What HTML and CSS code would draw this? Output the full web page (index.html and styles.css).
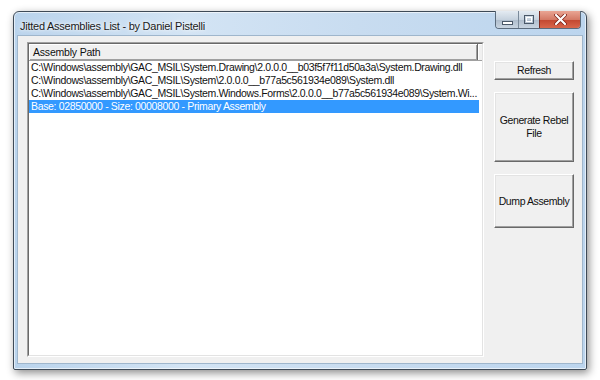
FILE: index.html
```html
<!DOCTYPE html>
<html>
<head>
<meta charset="utf-8">
<link rel="stylesheet" href="styles.css">
</head>
<body>
<div class="desktop">
  <div class="window">
    <div class="titlebar">
      <span class="title">Jitted Assemblies List - by Daniel Pistelli</span>
      <div class="caption">
        <div class="cbtn cmin"><svg width="11" height="4" viewBox="0 0 11 4"><rect x="0.5" y="0.5" width="10" height="3" fill="#fff" stroke="#4a5868"/></svg></div>
        <div class="cbtn cmax"><svg width="10" height="9" viewBox="0 0 10 9"><rect x="0.5" y="0.5" width="9" height="8" fill="none" stroke="#4a5868"/><rect x="2.5" y="2.5" width="5" height="4" fill="none" stroke="#fff"/></svg></div>
        <div class="cbtn cclose"><svg width="13" height="11" viewBox="0 0 13 11"><path d="M2 1 L11 10 M11 1 L2 10" stroke="#7a1d12" stroke-width="3.6" stroke-linecap="round"/><path d="M2 1 L11 10 M11 1 L2 10" stroke="#fff" stroke-width="2.2" stroke-linecap="round"/></svg></div>
      </div>
    </div>
    <div class="client">
      <div class="listview">
        <div class="lv-inner">
          <div class="header">
            <div class="col">Assembly Path</div>
            <div class="col-rest"></div>
          </div>
          <div class="rows">
            <div class="row">C:\Windows\assembly\GAC_MSIL\System.Drawing\2.0.0.0__b03f5f7f11d50a3a\System.Drawing.dll</div>
            <div class="row">C:\Windows\assembly\GAC_MSIL\System\2.0.0.0__b77a5c561934e089\System.dll</div>
            <div class="row">C:\Windows\assembly\GAC_MSIL\System.Windows.Forms\2.0.0.0__b77a5c561934e089\System.Wi...</div>
            <div class="row selected">Base: 02850000 - Size: 00008000 - Primary Assembly</div>
          </div>
        </div>
      </div>
      <div class="buttons">
        <div class="btn b-refresh"><span>Refresh</span></div>
        <div class="btn b-gen"><span>Generate Rebel<br>File</span></div>
        <div class="btn b-dump"><span>Dump Assembly</span></div>
      </div>
    </div>
  </div>
</div>
</body>
</html>
```
FILE: styles.css
```css
html, body {
  margin: 0;
  padding: 0;
  background: #ffffff;
}
.desktop {
  width: 600px;
  height: 380px;
  padding: 11px 0 0 13px;
  box-sizing: border-box;
}
.window {
  width: 574px;
  height: 359px;
  box-sizing: border-box;
  border: 1px solid #3e4a57;
  border-radius: 6px 6px 2px 2px;
  background: linear-gradient(to right, #b9d3ec 0%, #d3e4f4 30%, #c8dcf0 60%, #bcd5ee 100%);
  box-shadow: 2px 3px 8px rgba(0,0,0,0.45), inset 0 0 0 1px rgba(255,255,255,0.6);
  padding: 0 4px 6px 4px;
  display: flex;
  flex-direction: column;
  font-family: "Liberation Sans", Arial, sans-serif;
}
.titlebar {
  height: 24px;
  display: flex;
  align-items: flex-start;
  justify-content: space-between;
}
.title {
  font-size: 11px;
  color: #1a1a1a;
  padding: 8px 0 0 2px;
  text-shadow: 0 0 6px #ffffff, 0 0 3px #ffffff;
  letter-spacing: -0.25px;
}
.caption {
  display: flex;
  height: 17px;
  margin-top: -1px;
  margin-right: 1px;
  border: 1px solid #5b6b7c;
  border-top: none;
  border-radius: 0 0 4px 4px;
  overflow: hidden;
}
.cbtn {
  display: flex;
  align-items: center;
  justify-content: center;
  height: 17px;
}
.cmin {
  width: 23px;
  background: linear-gradient(#e4ebf2 0%, #c6d2de 50%, #aebccb 51%, #c9d5e1 100%);
  border-right: 1px solid #7a8a9a;
  align-items: flex-end;
  padding-bottom: 3px;
  box-sizing: border-box;
}
.cmax {
  width: 20px;
  background: linear-gradient(#e4ebf2 0%, #c6d2de 50%, #aebccb 51%, #c9d5e1 100%);
  border-right: 1px solid #7a2a20;
}
.cclose {
  width: 40px;
  background: linear-gradient(#e9a594 0%, #d47a66 50%, #c2462f 51%, #d9674b 100%);
}
.client {
  flex: 1;
  background: #f0f0f0;
  display: flex;
  padding: 6px 0 6px 9px;
  box-sizing: border-box;
  box-shadow: 0 0 0 1px #9fb6cc;
}
.listview {
  width: 457px;
  height: 315px;
  box-sizing: border-box;
  border: 1px solid;
  border-color: #a0a0a0 #ffffff #ffffff #a0a0a0;
  background: #ffffff;
}
.lv-inner {
  height: 100%;
  box-sizing: border-box;
  border: 1px solid;
  border-color: #696969 #e3e3e3 #e3e3e3 #696969;
  overflow: hidden;
}
.header {
  display: flex;
  height: 16px;
  background: #f0f0f0;
  border-bottom: 1px solid #a0a0a0;
  font-size: 10.5px;
  letter-spacing: -0.2px;
  color: #111;
}
.col {
  width: 449px;
  box-sizing: border-box;
  padding: 2px 0 0 4px;
  border-right: 1px solid #696969;
  box-shadow: inset 1px 1px 0 #ffffff, inset -1px -1px 0 #a0a0a0;
}
.col-rest {
  flex: 1;
  box-shadow: inset 1px 1px 0 #ffffff;
}
.rows {
  font-size: 10.5px;
  letter-spacing: -0.35px;
  color: #111;
}
.row {
  height: 13px;
  line-height: 13px;
  padding-left: 2px;
  width: 450px;
  box-sizing: border-box;
  white-space: nowrap;
  overflow: hidden;
}
.row.selected {
  background: #3399ff;
  color: #ffffff;
}
.buttons {
  display: flex;
  flex-direction: column;
  gap: 12px;
  margin-left: 10px;
  padding-top: 19px;
}
.btn {
  width: 80px;
  box-sizing: border-box;
  background: #f0f0f0;
  border: 1px solid;
  border-color: #ffffff #696969 #696969 #ffffff;
  box-shadow: inset -1px -1px 0 #a0a0a0, inset 1px 1px 0 #e3e3e3;
  display: flex;
  align-items: center;
  justify-content: center;
  text-align: center;
  font-size: 10.5px;
  letter-spacing: -0.4px;
  color: #111;
  line-height: 13px;
  white-space: nowrap;
}
.b-refresh { height: 19px; }
.b-gen { height: 70px; }
.b-dump { height: 54px; }
```
